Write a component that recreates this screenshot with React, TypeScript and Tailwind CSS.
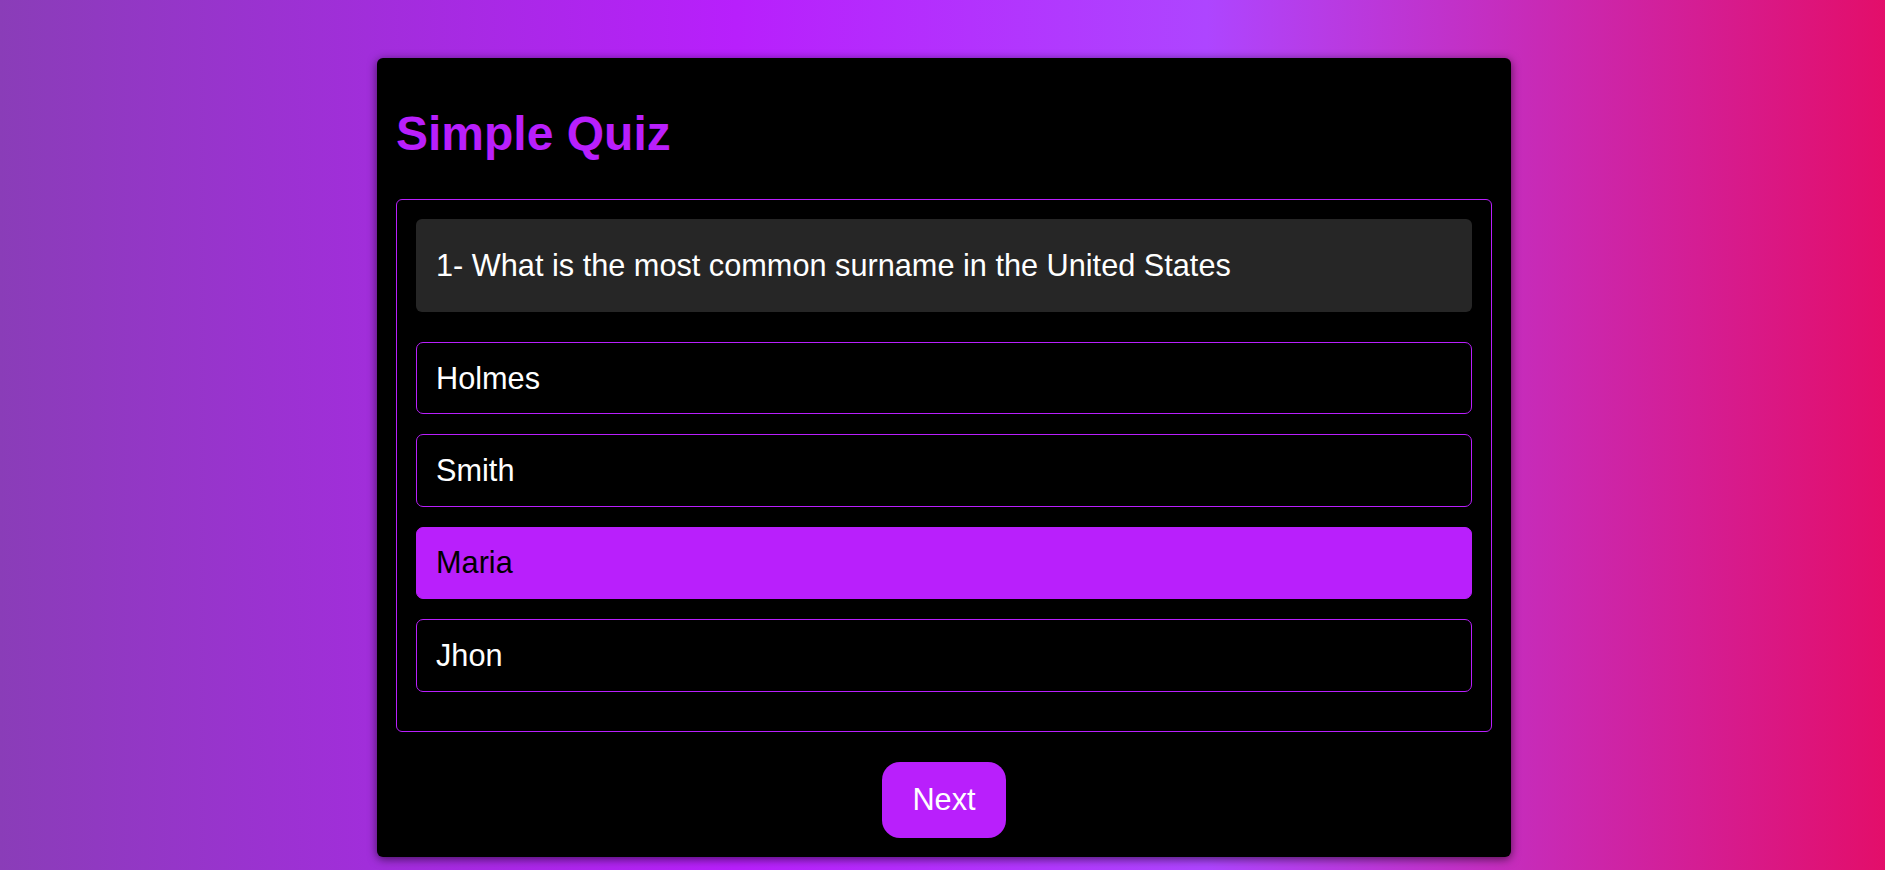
import React, { useState } from 'react';

const options = ['Holmes', 'Smith', 'Maria', 'Jhon'];

const App: React.FC = () => {
  const [selected, setSelected] = useState(2);

  return (
    <div
      className="min-h-[870px] w-full overflow-hidden pt-[58px] bg-[linear-gradient(90deg,#8a3db8_0%,#b81ffc_39%,#ae45ff_64%,#e30e6a_100%)]"
      style={{ fontFamily: '"Liberation Sans", Arial, sans-serif' }}
    >
      <div className="ml-[377px] w-[1134px] rounded-md bg-black p-[19px] shadow-[0_2px_10px_rgba(0,0,0,0.6)]">
        <h1 className="mt-[29px] mb-[38px] text-[48px] leading-[55px] font-bold text-[#b91ffc]">
          Simple Quiz
        </h1>

        <div className="rounded-md border border-[#b91ffc] p-[19px]">
          <div className="mb-[30px] flex h-[93px] items-center rounded-md bg-[#262626] px-5 text-[30.7px] leading-[35px] text-white">
            1- What is the most common surname in the United States
          </div>

          <div className="flex flex-col gap-5 pb-5">
            {options.map((opt, i) => (
              <button
                key={opt}
                onClick={() => setSelected(i)}
                className={`flex h-[72.4px] w-full items-center rounded-[7px] border pl-[19px] text-left text-[30.7px] leading-[35px] ${
                  selected === i
                    ? 'border-[#b91ffc] bg-[#b91ffc] text-black'
                    : 'border-[#b91ffc] bg-black text-white'
                }`}
              >
                {opt}
              </button>
            ))}
          </div>
        </div>

        <div className="mt-[30px] flex justify-center">
          <button className="h-[76px] rounded-[18px] bg-[#b91ffc] px-[30px] text-[30.7px] leading-[35px] text-white">
            Next
          </button>
        </div>
      </div>
    </div>
  );
};

export default App;
